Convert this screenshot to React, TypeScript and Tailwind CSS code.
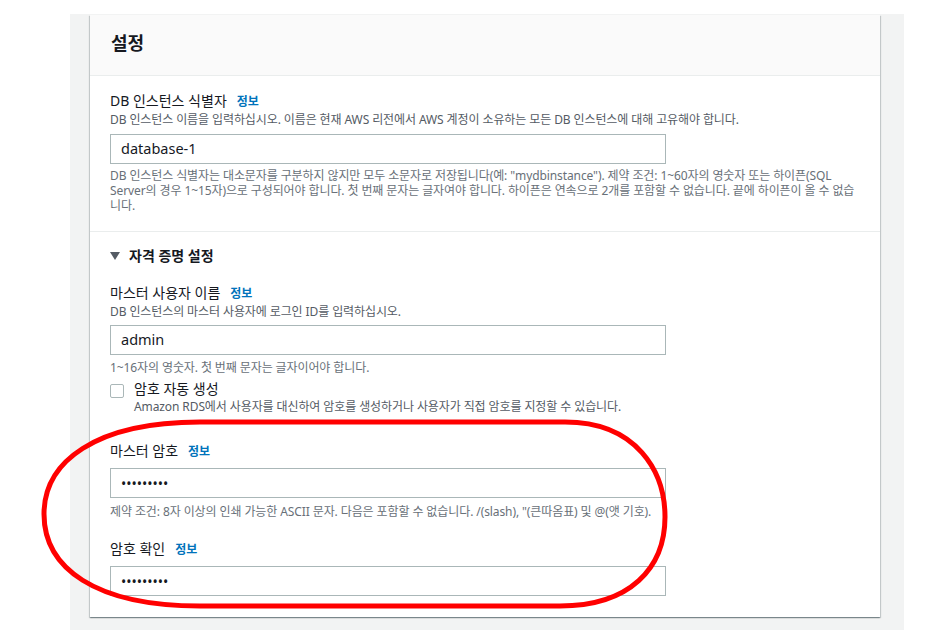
import React from 'react';

const font = { fontFamily: '"Noto Sans", "Noto Sans CJK KR", sans-serif' };

const Info = () => (
  <span className="ml-[10px] text-[12px] font-bold text-[#0073bb]">정보</span>
);

const Field = ({ value, className = '' }: { value: string; className?: string }) => (
  <div
    className={`w-[556px] h-[30px] border border-[#aab7b8] bg-white pl-[10px] flex items-center text-[14.5px] text-[#16191f] ${className}`}
  >
    {value}
  </div>
);

const App = () => {
  return (
    <div className="relative w-[942px] h-[630px] overflow-hidden bg-white pt-[14px] pl-[70px]" style={font}>
      <div className="w-[834px] h-[616px] bg-[#f2f3f3] pl-[20px] pt-[1px]">
        <div className="w-[790px] bg-white shadow-[0_1px_1px_0_rgba(0,28,36,0.3),1px_1px_1px_0_rgba(0,28,36,0.15),-1px_1px_1px_0_rgba(0,28,36,0.15)]">
          {/* Header */}
          <div className="h-[61px] bg-[#fafafa] border-b border-[#eaeded] pl-[21px] flex items-center">
            <h2 className="text-[18px] font-bold text-[#16191f] mt-[-3px]">설정</h2>
          </div>

          {/* DB instance identifier */}
          <div className="px-[20px] pt-[15px] pb-[18px] border-b border-[#eaeded]">
            <div className="leading-[20px] text-[14px] text-[#16191f]">
              DB 인스턴스 식별자<Info />
            </div>
            <div className="leading-[16px] text-[12px] tracking-[-0.1px] text-[#545b64]">
              DB 인스턴스 이름을 입력하십시오. 이름은 현재 AWS 리전에서 AWS 계정이 소유하는 모든 DB 인스턴스에 대해 고유해야 합니다.
            </div>
            <Field value="database-1" className="mt-[6px]" />
            <div className="mt-[4px] leading-[15px] text-[12px] tracking-[-0.1px] text-[#687078] w-[750px]">
              DB 인스턴스 식별자는 대소문자를 구분하지 않지만 모두 소문자로 저장됩니다(예: "mydbinstance"). 제약 조건: 1~60자의 영숫자 또는 하이픈(SQL Server의 경우 1~15자)으로 구성되어야 합니다. 첫 번째 문자는 글자여야 합니다. 하이픈은 연속으로 2개를 포함할 수 없습니다. 끝에 하이픈이 올 수 없습니다.
            </div>
          </div>

          {/* Credentials */}
          <div className="px-[20px] pt-[14px] pb-[21px]">
            <div className="flex items-center leading-[20px] text-[14px] font-bold text-[#16191f]">
              <svg width="10" height="8" viewBox="0 0 10 8" className="mr-[9px]">
                <polygon points="0,0 10,0 5,8" fill="#545b64" />
              </svg>
              자격 증명 설정
            </div>

            <div className="mt-[17px] leading-[20px] text-[14px] text-[#16191f]">
              마스터 사용자 이름<Info />
            </div>
            <div className="leading-[16px] text-[12px] tracking-[-0.1px] text-[#545b64]">
              DB 인스턴스의 마스터 사용자에 로그인 ID를 입력하십시오.
            </div>
            <Field value="admin" className="mt-[5px]" />
            <div className="mt-[5px] leading-[15px] text-[12px] tracking-[-0.1px] text-[#687078]">
              1~16자의 영숫자. 첫 번째 문자는 글자이어야 합니다.
            </div>

            <div className="mt-[4px] flex items-start">
              <div className="mt-[5px] w-[14px] h-[14px] rounded-[2px] border border-[#aab7b8] bg-white" />
              <div className="ml-[10px]">
                <div className="leading-[20px] text-[14px] text-[#16191f]">암호 자동 생성</div>
                <div className="leading-[16px] text-[12px] tracking-[-0.1px] text-[#545b64]">
                  Amazon RDS에서 사용자를 대신하여 암호를 생성하거나 사용자가 직접 암호를 지정할 수 있습니다.
                </div>
              </div>
            </div>

            <div className="mt-[26px] leading-[20px] text-[14px] text-[#16191f]">
              마스터 암호<Info />
            </div>
            <Field value="•••••••••" className="mt-[6px] !text-[14px]" />
            <div className="mt-[6px] leading-[15px] text-[12px] tracking-[-0.1px] text-[#687078]">
              제약 조건: 8자 이상의 인쇄 가능한 ASCII 문자. 다음은 포함할 수 없습니다. /(slash), "(큰따옴표) 및 @(앳 기호).
            </div>

            <div className="mt-[20px] leading-[20px] text-[14px] text-[#16191f]">
              암호 확인<Info />
            </div>
            <Field value="•••••••••" className="mt-[6px] !text-[14px]" />
          </div>
        </div>
      </div>

      {/* Red annotation */}
      <svg className="absolute left-0 top-0 pointer-events-none" width="942" height="630">
        <path
          d="M 200 422 L 565 422 C 637 422 665 472 665 517 C 665 568 630 606 560 606 L 200 606 C 95 606 44 568 44 514 C 44 462 95 422 200 422 Z"
          fill="none"
          stroke="#ff0000"
          strokeWidth="5"
        />
      </svg>
    </div>
  );
};

export default App;
